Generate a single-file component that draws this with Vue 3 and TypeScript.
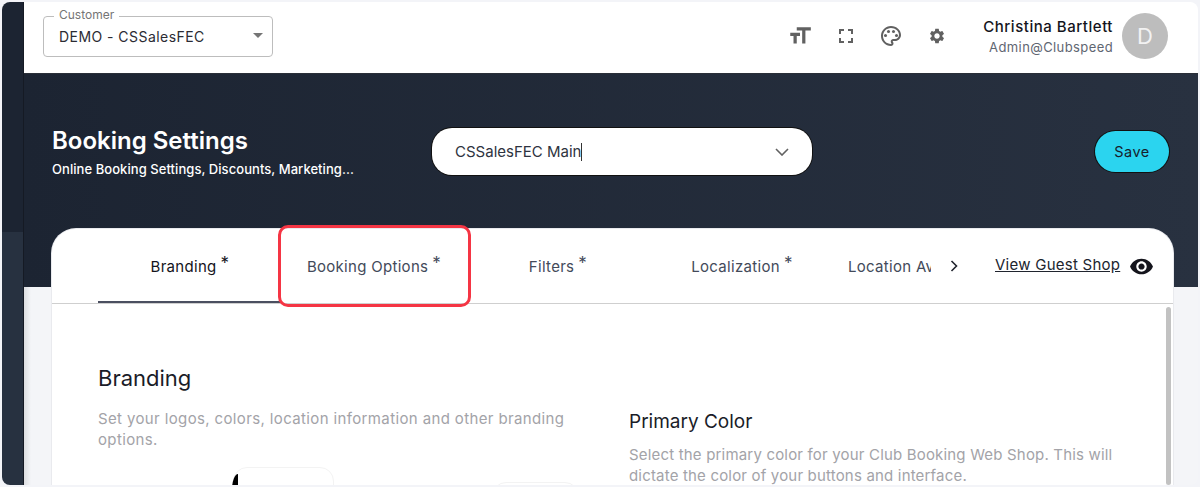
<script setup lang="ts">
const tabs = [
  { label: 'Branding', active: true },
  { label: 'Booking Options', active: false },
  { label: 'Filters', active: false },
  { label: 'Localization', active: false },
]
</script>

<template>
  <div class="page">
    <div class="frame">
      <aside class="rail">
        <div class="rail-top"></div>
        <div class="rail-mid"></div>
      </aside>

      <div class="main">
        <header class="topbar">
          <div class="customer">
            <span class="customer-label">Customer</span>
            <span class="customer-value">DEMO - CSSalesFEC</span>
            <span class="caret"></span>
          </div>

          <div class="tools">
            <svg class="tool" viewBox="0 0 24 24" width="26" height="26">
              <path d="M9 4v3h5v12h3V7h5V4H9zm-6 8h3v7h3v-7h3V9H3v3z" />
            </svg>
            <svg class="tool" viewBox="0 0 24 24" width="24" height="24">
              <path d="M7 14H5v5h5v-2H7v-3zm-2-4h2V7h3V5H5v5zm12 7h-3v2h5v-5h-2v3zM14 5v2h3v3h2V5h-5z" />
            </svg>
            <svg class="tool" viewBox="0 0 24 24" width="24" height="24">
              <path d="M12 2C6.49 2 2 6.49 2 12s4.49 10 10 10c1.38 0 2.5-1.12 2.5-2.5 0-.61-.23-1.2-.64-1.67-.08-.1-.13-.21-.13-.33 0-.28.22-.5.5-.5H16c3.31 0 6-2.69 6-6 0-4.96-4.49-9-10-9zm4 13h-1.77c-1.38 0-2.5 1.12-2.5 2.5 0 .61.22 1.19.63 1.65.06.07.14.19.14.35 0 .28-.22.5-.5.5-4.41 0-8-3.59-8-8s3.59-8 8-8 8 3.14 8 7c0 2.21-1.79 4-4 4z" />
              <circle cx="6.5" cy="11.5" r="1.5" />
              <circle cx="9.5" cy="7.5" r="1.5" />
              <circle cx="14.5" cy="7.5" r="1.5" />
              <circle cx="17.5" cy="11.5" r="1.5" />
            </svg>
            <svg class="tool tool-gear" viewBox="0 0 24 24" width="18" height="18">
              <path d="M19.14 12.94c.04-.3.06-.61.06-.94 0-.32-.02-.64-.07-.94l2.03-1.58c.18-.14.23-.41.12-.61l-1.92-3.32c-.12-.22-.37-.29-.59-.22l-2.39.96c-.5-.38-1.03-.7-1.62-.94l-.36-2.54c-.04-.24-.24-.41-.48-.41h-3.84c-.24 0-.43.17-.47.41l-.36 2.54c-.59.24-1.13.57-1.62.94l-2.39-.96c-.22-.08-.47 0-.59.22L2.74 8.87c-.12.21-.08.47.12.61l2.03 1.58c-.05.3-.09.63-.09.94s.02.64.07.94l-2.03 1.58c-.18.14-.23.41-.12.61l1.92 3.32c.12.22.37.29.59.22l2.39-.96c.5.38 1.03.7 1.62.94l.36 2.54c.05.24.24.41.48.41h3.84c.24 0 .44-.17.47-.41l.36-2.54c.59-.24 1.13-.56 1.62-.94l2.39.96c.22.08.47 0 .59-.22l1.92-3.32c.12-.22.07-.47-.12-.61l-2.01-1.58zM12 15.6c-1.98 0-3.6-1.62-3.6-3.6s1.62-3.6 3.6-3.6 3.6 1.62 3.6 3.6-1.62 3.6-3.6 3.6z" />
            </svg>
          </div>

          <div class="user">
            <div class="user-text">
              <div class="user-name">Christina Bartlett</div>
              <div class="user-mail">Admin@Clubspeed</div>
            </div>
            <div class="avatar">D</div>
          </div>
        </header>

        <section class="hero">
          <div class="hero-title">
            <h1>Booking Settings</h1>
            <p>Online Booking Settings, Discounts, Marketing...</p>
          </div>
          <div class="location">
            <span class="location-text">CSSalesFEC Main</span>
            <span class="cursor"></span>
            <svg class="chevron" viewBox="0 0 14 8" width="14" height="8">
              <path d="M1 1l6 6 6-6" />
            </svg>
          </div>
          <button class="save">Save</button>
        </section>

        <section class="card">
          <nav class="tabs">
            <div
              v-for="tab in tabs"
              :key="tab.label"
              class="tab"
              :class="{ active: tab.active }"
            >
              {{ tab.label }}<sup>*</sup>
            </div>
            <div class="tab tab-cut"><span>Location Availability</span></div>
            <svg class="next" viewBox="0 0 8 12" width="8" height="12">
              <path d="M1.5 1l5 5-5 5" />
            </svg>
            <a class="guest">View Guest Shop</a>
            <svg class="eye" viewBox="0 0 24 24" width="25" height="25">
              <path d="M12 4.5C7 4.5 2.73 7.61 1 12c1.73 4.39 6 7.5 11 7.5s9.27-3.11 11-7.5c-1.73-4.39-6-7.5-11-7.5zM12 17c-2.76 0-5-2.24-5-5s2.24-5 5-5 5 2.24 5 5-2.24 5-5 5zm0-8c-1.66 0-3 1.34-3 3s1.34 3 3 3 3-1.34 3-3-1.34-3-3-3z" />
            </svg>
            <div class="callout"></div>
          </nav>

          <div class="content">
            <div class="col-left">
              <h2>Branding</h2>
              <p>Set your logos, colors, location information and other branding options.</p>
              <div class="logos">
                <div class="logo-box"><span class="logo-mark"></span></div>
                <div class="logo-box small"></div>
              </div>
            </div>
            <div class="col-right">
              <h3>Primary Color</h3>
              <p>Select the primary color for your Club Booking Web Shop. This will dictate the color of your buttons and interface.</p>
            </div>
            <div class="scrollbar"></div>
          </div>
        </section>
      </div>
    </div>
  </div>
</template>

<style>
html,
body {
  margin: 0;
  background: #f3f4f8;
}
</style>

<style scoped>
.page {
  box-sizing: border-box;
  width: 1200px;
  height: 487px;
  padding: 2px;
  font-family: Inter, 'Liberation Sans', sans-serif;
  overflow: hidden;
}

.frame {
  display: flex;
  height: 483px;
  border-radius: 8px;
  overflow: hidden;
  background: #f4f5f8;
}

.rail {
  display: flex;
  flex-direction: column;
  flex: 0 0 21px;
}
.rail-top {
  height: 230px;
  background: #1c2432;
}
.rail-mid {
  flex: 1;
  background: #273140;
}

.main {
  flex: 1;
  min-width: 0;
  display: flex;
  flex-direction: column;
  border-left: 1px solid #151a24;
  background: linear-gradient(90deg, #dcdde0, #f4f5f8 7px);
}

.topbar {
  flex: 0 0 72px;
  display: flex;
  align-items: center;
  box-sizing: border-box;
  padding: 0 30px 3px 19px;
  background: #fff;
  border-bottom: 1px solid #2a2f38;
}

.customer {
  position: relative;
  box-sizing: border-box;
  width: 230px;
  height: 41px;
  margin-top: 1px;
  padding: 0 15px;
  display: flex;
  align-items: center;
  border: 1px solid #bdbdbd;
  border-radius: 4px;
  color: #2b2b33;
}
.customer-label {
  position: absolute;
  top: -9px;
  left: 10px;
  padding: 0 5px;
  background: #fff;
  font-size: 12px;
  line-height: 14px;
  color: #757575;
}
.customer-value {
  font-size: 14px;
  letter-spacing: 0.45px;
  white-space: nowrap;
}
.caret {
  position: absolute;
  right: 9px;
  top: 16px;
  border-left: 5.5px solid transparent;
  border-right: 5.5px solid transparent;
  border-top: 5.5px solid #757575;
}

.tools {
  margin-left: auto;
  display: flex;
  align-items: center;
  gap: 21px;
}
.tool {
  fill: #616161;
}
.tool-gear {
  margin-left: 4px;
}

.user {
  display: flex;
  align-items: center;
  margin-left: 37px;
}
.user-text {
  text-align: right;
  margin: 2px 9px 0 0;
}
.user-name {
  font-size: 15px;
  line-height: 20px;
  font-weight: 500;
  letter-spacing: 0.53px;
  color: #14141c;
}
.user-mail {
  font-size: 13px;
  line-height: 20px;
  letter-spacing: 0.4px;
  color: #5f6672;
}
.avatar {
  width: 46px;
  height: 46px;
  border-radius: 50%;
  background: #bdbdbd;
  color: #f2f2f2;
  font-size: 22px;
  display: flex;
  align-items: center;
  justify-content: center;
}

.hero {
  flex: 0 0 213px;
  box-sizing: border-box;
  display: flex;
  align-items: flex-start;
  padding: 54px 29px 0 28px;
  background: linear-gradient(90deg, #1c2432, #283140);
}
.hero-title {
  width: 380px;
  margin-top: -1px;
  color: #fff;
}
.hero-title h1 {
  margin: 0;
  font-size: 24px;
  line-height: 28px;
  font-weight: 600;
}
.hero-title p {
  margin: 5px 0 0;
  font-size: 13px;
  line-height: 18px;
  font-weight: 500;
  letter-spacing: 0.06px;
}
.location {
  box-sizing: border-box;
  width: 380px;
  height: 47px;
  padding: 0 23px;
  display: flex;
  align-items: center;
  background: #fff;
  box-shadow: 0 0 0 1px #111;
  border-radius: 20px;
  color: #2e3340;
  font-size: 15px;
}
.cursor {
  width: 1px;
  height: 18px;
  background: #333;
}
.chevron {
  margin-left: auto;
  fill: none;
  stroke: #616161;
  stroke-width: 1.6;
}
.save {
  margin: 3px 0 0 auto;
  width: 74px;
  height: 41px;
  border: 0;
  box-shadow: 0 0 0 1px #111;
  border-radius: 21px;
  background: #2bd4ef;
  color: #16202c;
  font: 400 14.5px Inter, 'Liberation Sans', sans-serif;
  letter-spacing: 0.5px;
}

.card {
  flex: 1;
  min-height: 0;
  margin: -58px 25px 0 28px;
  border-radius: 24px 24px 0 0;
  background: #fff;
  box-shadow: 0 0 0 1px #e9eaee;
  display: flex;
  flex-direction: column;
  position: relative;
}

.tabs {
  flex: 0 0 75px;
  box-sizing: border-box;
  display: flex;
  align-items: stretch;
  padding-left: 46px;
  border-bottom: 1px solid #cfcfcf;
}
.tab {
  flex: 0 0 184px;
  box-sizing: border-box;
  display: flex;
  align-items: center;
  justify-content: center;
  font-size: 15px;
  letter-spacing: 0.3px;
  color: #434a5a;
  white-space: nowrap;
}
.tab sup {
  font-size: 17px;
  line-height: 1;
  margin-left: 4px;
  transform: translateY(-3px);
}
.tab.active {
  color: #14141c;
  box-shadow: inset 0 -2px 0 #4a4f60;
}
.tab-cut {
  flex: 0 0 97px;
  justify-content: flex-start;
  padding-left: 14px;
  overflow: hidden;
}
.next {
  align-self: center;
  margin-left: 19px;
  fill: none;
  stroke: #20242e;
  stroke-width: 1.6;
}
.guest {
  align-self: center;
  margin: -3px 0 0 37px;
  font-size: 15px;
  letter-spacing: 0.25px;
  color: #20242e;
  text-decoration: underline;
  white-space: nowrap;
}
.eye {
  align-self: center;
  margin-left: 9px;
  fill: #14141c;
}
.callout {
  position: absolute;
  left: 226px;
  top: -4px;
  width: 193px;
  height: 82px;
  box-sizing: border-box;
  border: 3px solid #f53544;
  border-radius: 10px;
}

.content {
  flex: 1;
  min-height: 0;
  position: relative;
  display: flex;
  padding: 59px 0 0 46px;
  overflow: hidden;
}
.col-left {
  flex: 0 0 485px;
}
.col-left h2 {
  margin: 0;
  font-size: 22px;
  line-height: 30px;
  font-weight: 400;
  color: #1a1c28;
}
.col-left p {
  margin: 15px 0 0;
  font-size: 15px;
  line-height: 21px;
  letter-spacing: 0.37px;
  color: #a3a3a8;
}
.col-right {
  flex: 0 0 490px;
  margin: 46px 0 0 46px;
}
.col-right h3 {
  margin: 0;
  font-size: 19px;
  line-height: 26px;
  font-weight: 400;
  color: #1a1c28;
}
.col-right p {
  margin: 9px 0 0;
  font-size: 15px;
  line-height: 21px;
  letter-spacing: 0.18px;
  color: #a3a3a8;
}
.logos {
  display: flex;
  margin-top: 17px;
  padding-left: 135px;
}
.logo-box {
  position: relative;
  flex: 0 0 auto;
  box-sizing: border-box;
  width: 101px;
  height: 60px;
  border: 1px solid #f3f3f3;
  border-radius: 14px;
}
.logo-box.small {
  width: 87px;
  margin: 15px 0 0 158px;
}
.logo-mark {
  position: absolute;
  left: -2px;
  top: 6px;
  width: 6px;
  height: 16px;
  border-radius: 100% 0 0 0;
  background: #000;
}
.scrollbar {
  position: absolute;
  right: 2px;
  top: 3px;
  bottom: 0;
  width: 5px;
  border-radius: 3px;
  background: #c2c2c2;
}
</style>
